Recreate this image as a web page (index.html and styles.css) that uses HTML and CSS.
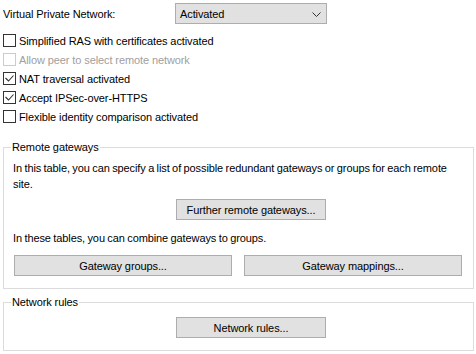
FILE: index.html
```html
<!DOCTYPE html>
<html>
<head>
<meta charset="utf-8">
<link rel="stylesheet" href="styles.css">
</head>
<body>
<div class="vpn-row">
  <span class="vpn-label">Virtual Private Network:</span>
  <div class="select">
    <span>Activated</span>
    <svg class="chev" width="9" height="5" viewBox="0 0 9 5"><polyline points="0.5,0.5 4.5,4.5 8.5,0.5" fill="none" stroke="#333" stroke-width="1"/></svg>
  </div>
</div>
<div class="checks">
  <div class="check"><span class="box"></span><span>Simplified RAS with certificates activated</span></div>
  <div class="check disabled"><span class="box"></span><span>Allow peer to select remote network</span></div>
  <div class="check"><span class="box"><svg width="11" height="11" viewBox="0 0 11 11"><polyline points="1.5,5 4.5,8 9.5,2.5" fill="none" stroke="#333" stroke-width="1.1"/></svg></span><span>NAT traversal activated</span></div>
  <div class="check"><span class="box"><svg width="11" height="11" viewBox="0 0 11 11"><polyline points="1.5,5 4.5,8 9.5,2.5" fill="none" stroke="#333" stroke-width="1.1"/></svg></span><span>Accept IPSec-over-HTTPS</span></div>
  <div class="check"><span class="box"></span><span>Flexible identity comparison activated</span></div>
</div>
<fieldset class="group group-gw">
  <legend>Remote gateways</legend>
  <p class="txt first">In this table, you can specify a list of possible redundant gateways or groups for each remote site.</p>
  <button class="btn btn-mid">Further remote gateways...</button>
  <p class="txt second">In these tables, you can combine gateways to groups.</p>
  <div class="btn-pair">
    <button class="btn">Gateway groups...</button>
    <button class="btn">Gateway mappings...</button>
  </div>
</fieldset>
<fieldset class="group group-nr">
  <legend>Network rules</legend>
  <button class="btn btn-mid">Network rules...</button>
</fieldset>
</body>
</html>
```
FILE: styles.css
```css
html, body {
  margin: 0;
  padding: 0;
  background: #fff;
}
body {
  font-family: "Liberation Sans", Arial, sans-serif;
  font-size: 11px;
  letter-spacing: -0.1px;
  color: #000;
  width: 476px;
  height: 354px;
  overflow: hidden;
}
.vpn-row {
  display: flex;
  align-items: center;
  padding-top: 3px;
  height: 21px;
}
.vpn-label {
  width: 172px;
  padding-left: 3px;
}
.select {
  box-sizing: border-box;
  width: 152px;
  height: 21px;
  background: #e1e1e1;
  border: 1px solid #adadad;
  display: flex;
  align-items: center;
  justify-content: space-between;
  padding: 0 5px 0 4px;
}
.chev {
  margin-top: 1px;
}
.checks {
  margin-top: 7px;
}
.check {
  height: 19px;
  display: flex;
  align-items: center;
  padding-left: 3px;
}
.box {
  box-sizing: border-box;
  width: 13px;
  height: 13px;
  border: 1px solid #333;
  background: #fff;
  margin-right: 3px;
  display: flex;
  align-items: center;
  justify-content: center;
}
.disabled {
  color: #a0a0a0;
}
.disabled .box {
  border-color: #ccc;
}
.group {
  margin: 0 2px 0 3px;
  border: 1px solid #dcdcdc;
  padding: 0 9px;
}
.group legend {
  padding: 0 1px;
  margin-left: -2px;
  line-height: 15px;
}
.group-gw {
  margin-top: 14px;
  padding-bottom: 12px;
}
.group-nr {
  margin-top: 6px;
  padding-bottom: 12px;
}
.txt {
  margin: 0;
  line-height: 16px;
  word-spacing: -0.5px;
}
.txt.first {
  margin-top: 5px;
}
.txt.second {
  margin-top: 10px;
}
.btn {
  box-sizing: border-box;
  height: 21px;
  background: #e1e1e1;
  border: 1px solid #adadad;
  font-family: inherit;
  font-size: inherit;
  letter-spacing: inherit;
  color: #000;
  padding: 0;
  border-radius: 0;
}
.btn-mid {
  display: block;
  width: 150px;
  margin: 7px 0 0 163px;
}
.group-nr .btn-mid {
  margin-top: 7px;
}
.btn-pair {
  display: grid;
  grid-template-columns: 218px 218px;
  column-gap: 12px;
  margin: 9px 0 0 1px;
}
```
